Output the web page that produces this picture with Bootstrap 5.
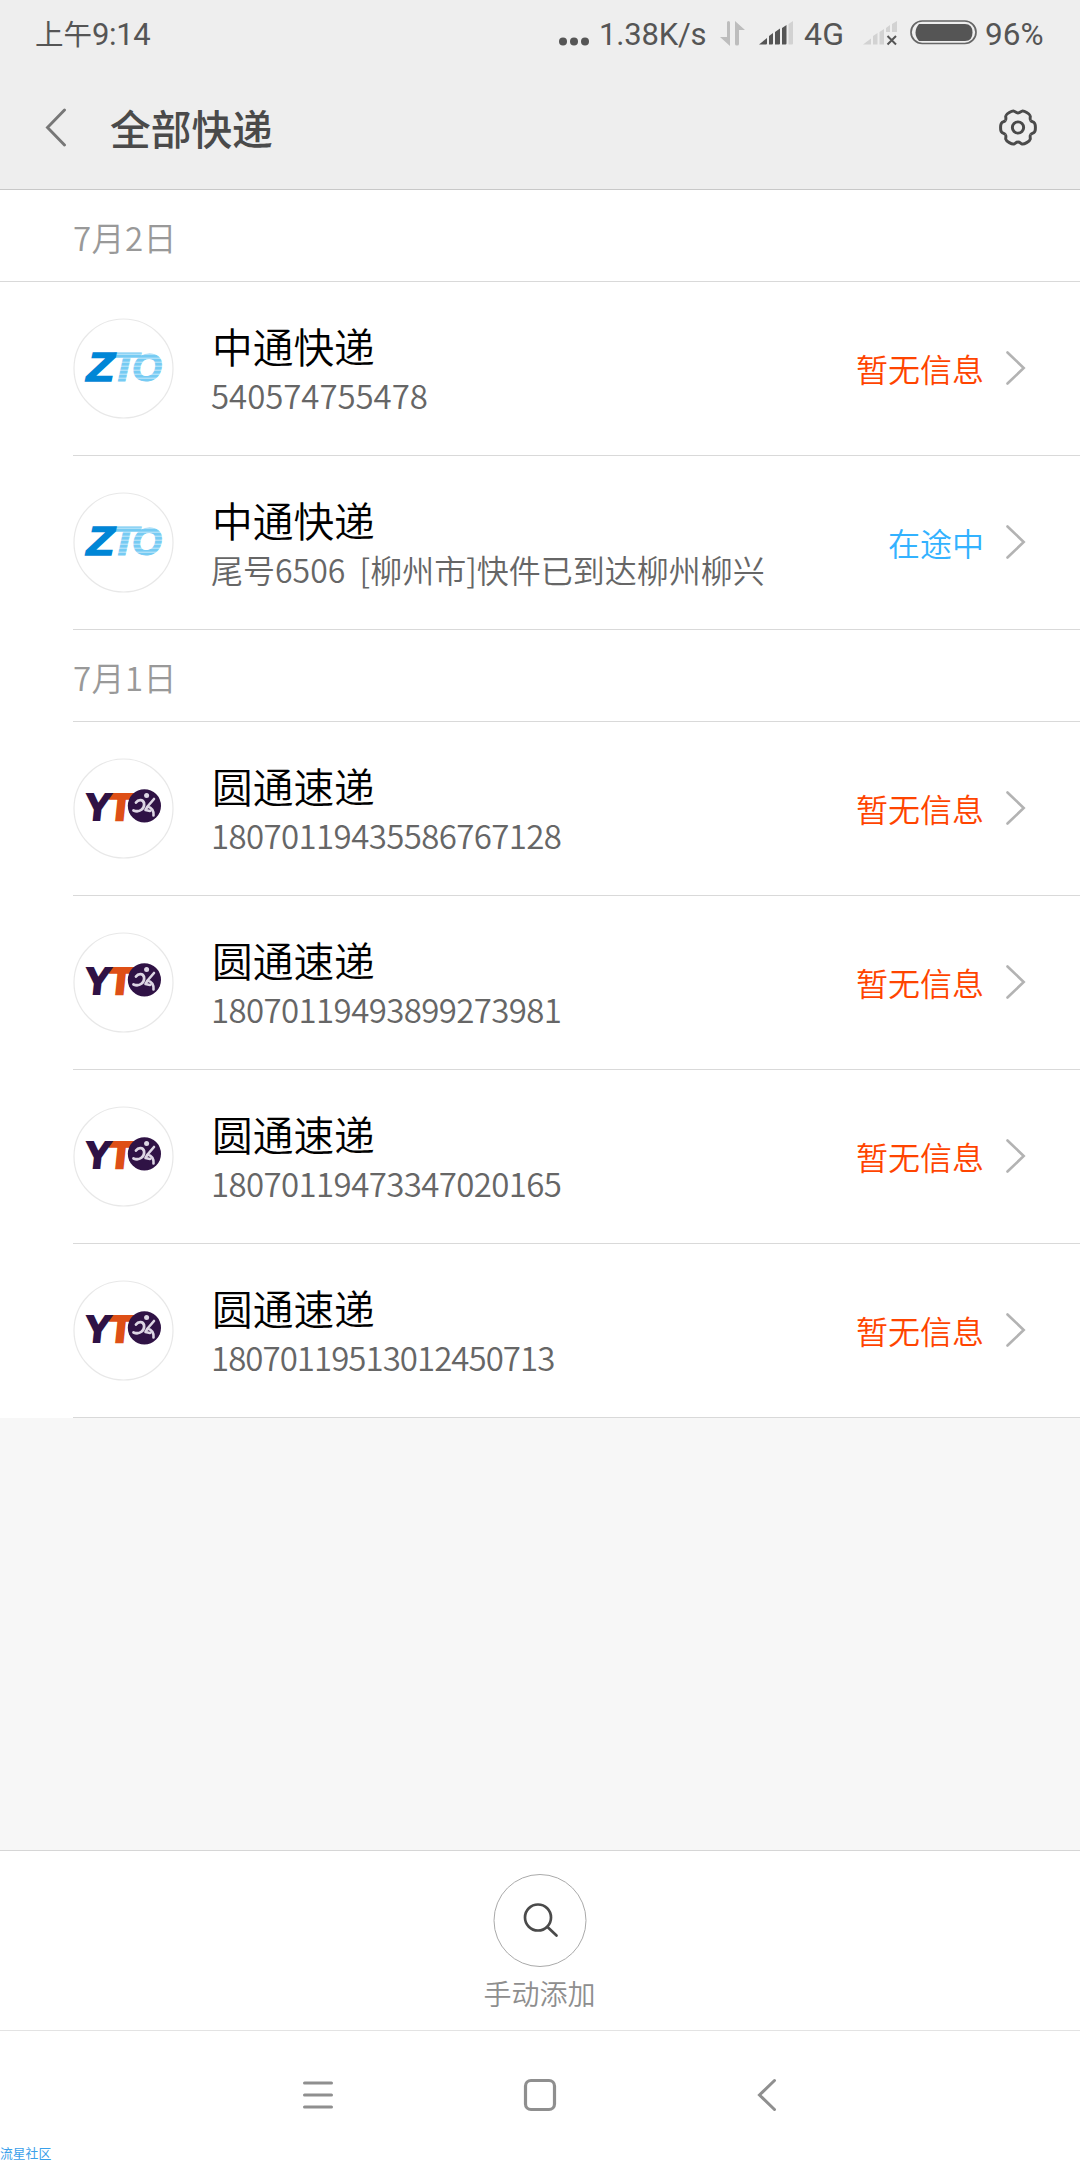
<!DOCTYPE html>
<html lang="zh-CN">
<head>
<meta charset="utf-8">
<meta name="viewport" content="width=device-width, initial-scale=1">
<title>全部快递</title>
<link href="https://cdn.jsdelivr.net/npm/bootstrap@5.3.0/dist/css/bootstrap.min.css" rel="stylesheet">
<style>
  body { font-family: "Noto Sans CJK SC", sans-serif; background: #f7f7f7; line-height: 1; }
  .screen { width: 1080px; height: 2160px; }
  svg { display: block; flex: none; }
  .topbar { background: #eee; height: 190px; border-bottom: 1px solid #c8c8c8; }
  .statusbar { height: 64px; padding: 0 35px 0 35px; color: #555; }
  .statusbar .clock { font-size: 28.5px; height: 64px; line-height: 65px; }
  .clock span, .stat-txt { font-family: Roboto, sans-serif; font-size: 31px; line-height: 69px; white-space: nowrap; }
  .clock span { letter-spacing: -.4px; }
  .speed { width: 111px; margin: 0 10px 0 10px; letter-spacing: -.2px; }
  .net { width: 42px; margin-left: 10px; font-size: 32px; letter-spacing: .2px; }
  .charge { width: 60px; margin-left: 8px; font-size: 31.5px; }
  .gap-a { margin-left: 13px; }
  .gap-b { margin-left: 17px; }
  .gap-c { margin-left: 12px; }
  .titlebar { height: 125px; padding: 0 40px 0 44px; color: #4a4a4a; }
  .titlebar h1 { font-size: 40.7px; font-weight: 500; line-height: 60px; margin: 2px 0 0 42px; }
  .day { height: 92px; padding-left: 73px; background: #fff; }
  .day > div { border-bottom: 1px solid #d9d9d9; height: 92px; font-size: 33px; letter-spacing: .4px; line-height: 94px; color: #999; font-weight: 350; }
  .day.full { padding-left: 0; }
  .day.full > div { padding-left: 73px; }
  .parcels { padding-left: 73px; background: #fff; border-radius: 0; }
  .parcel { height: 174px; border-bottom: 1px solid #d9d9d9; padding: 0 53px 0 0; }
  .logo { width: 101px; height: 101px; margin: 0 38px 1px 0; }
  .parcel .name { font-size: 40.7px; line-height: 50px; color: #000; margin-top: 3px; font-weight: 350; }
  .parcel .info { font-size: 32px; line-height: 49px; color: #666; font-weight: 350; white-space: pre; margin-left: -1px; }
  .parcel .digits { font-size: 33px; letter-spacing: -.05px; }
  .parcel .long { letter-spacing: -.6px; }
  .parcel .longer { letter-spacing: -.95px; }
  .parcel .state { font-size: 32px; line-height: 40px; margin: 0 21px 2px 0; color: #ff4400; font-weight: 350; }
  .parcel .state.moving { color: #33b2ff; }
  .parcel .arrow { margin-bottom: 2px; }
  .addbar { height: 181px; border-top: 1px solid #d6d6d6; border-bottom: 1px solid #e3e3e3; background: #fff; padding: 23px 1px 0 0; }
  .addbar .caption { font-size: 28px; line-height: 40px; margin-top: 5px; color: #8e8e8e; font-weight: 350; }
  .sysnav { height: 129px; background: #fff; padding: 47px 303px 0 302px; }
  .sysnav .home { margin-right: 12px; }
  .watermark { left: 0; bottom: 0; font-size: 12.8px; line-height: 14px; height: 14px; color: #3aa0ea; }
</style>
</head>
<body>
<svg width="0" height="0" class="position-absolute">
  <defs>
    <symbol id="zto" viewBox="0 0 101 101">
      <circle cx="50.5" cy="50.5" r="49.5" fill="#fff" stroke="#e8e8e8" stroke-width="1.2"/>
      <g font-family="Liberation Sans, sans-serif" font-weight="700" font-style="italic" font-size="41">
        <text x="37" y="63" fill="#76cbf3" stroke="#76cbf3" stroke-width=".8" textLength="28" lengthAdjust="spacingAndGlyphs">T</text>
        <text x="59" y="62.5" fill="#76cbf3" stroke="#76cbf3" font-size="39.500" textLength="30" lengthAdjust="spacingAndGlyphs">O</text>
        <path d="M40 36.2H92M40 40.2H92M40 44.2H92M40 48.2H92M40 52.2H92M40 56.2H92M40 60.2H92" stroke="#fff" stroke-opacity=".6" stroke-width="1"/>
        <text x="13.500" y="63" fill="#0086d6" stroke="#0086d6" stroke-width="1.400" textLength="28" lengthAdjust="spacingAndGlyphs">Z</text>
      </g>
    </symbol>
    <symbol id="yto" viewBox="0 0 101 101">
      <circle cx="50.5" cy="50.5" r="49.5" fill="#fff" stroke="#e8e8e8" stroke-width="1.2"/>
      <g font-family="Liberation Sans, sans-serif" font-weight="700" font-size="37.500" transform="translate(7 .7) skewX(-6)">
        <text x="34" y="61" fill="#de4f16" stroke="#de4f16" stroke-width="2.600" textLength="24" lengthAdjust="spacingAndGlyphs">T</text>
        <text x="10.500" y="61" fill="#2f1245" stroke="#2f1245" stroke-width="2.200" textLength="25" lengthAdjust="spacingAndGlyphs">Y</text>
      </g>
      <circle cx="71.4" cy="47.8" r="16.6" fill="#2f1245"/>
      <circle cx="73.6" cy="37.6" r="2.5" fill="#ddd6e4"/>
      <g fill="none" stroke="#ddd6e4" stroke-linecap="round" stroke-linejoin="round">
        <path d="M63 44.500C65.500 41 70 41.500 71 45C72 50.500 66.500 55 60.500 52.500" stroke-width="2.800"/>
        <path d="M81 41L74.500 48.500C78 49.500 81 52 80.500 57.500M74.500 48.500L72.500 52L77 53" stroke-width="2.600"/>
      </g>
    </symbol>
    <symbol id="next" viewBox="0 0 22 36"><path d="M2.5 2.5L18.7 18L2.5 33.5" fill="none" stroke="#b3b3b3" stroke-width="2.6" stroke-linecap="round"/></symbol>
    <path id="tooth" d="M12.3-7.1C13.4-5.2 14.8-5.7 15.9-4.6C17.4-3.3 17.4 3.3 15.9 4.6C14.8 5.7 13.4 5.2 12.3 7.1"/>
  </defs>
</svg>

<div class="screen position-relative d-flex flex-column overflow-hidden">
  <header class="topbar">
    <div class="statusbar d-flex">
      <div class="clock me-auto">上午<span>9:14</span></div>
      <svg width="30" height="64" viewBox="0 0 30 64" fill="#555"><circle cx="4" cy="41.5" r="4"/><circle cx="15" cy="41.5" r="4"/><circle cx="26" cy="41.5" r="4"/></svg>
      <div class="stat-txt speed">1.38K/s</div>
      <svg width="26" height="64" viewBox="0 0 26 64" fill="#bdbdbd"><path d="M7 22.500Q7 21 8.500 21T10 22.500V46L0 37H7ZM15 21L25 30H19V44Q19 45.500 17 45.500T15 44Z"/></svg>
      <svg class="gap-a" width="35" height="64" viewBox="0 0 35 64" fill="#555"><path d="M0 44.500L8 38V43.500Q8 44.500 7 44.500ZM10 36L14 33V43.500Q14 44.500 13 44.500H10ZM16 32L21 28.500V43.500Q21 44.500 20 44.500H16ZM23 28L27.500 25V43.500Q27.500 44.500 26.500 44.500H23Z"/><path fill="#d2d2d2" d="M29.500 24L34 21V43.500Q34 44.500 33 44.500H29.500Z"/></svg>
      <div class="stat-txt net">4G</div>
      <svg class="gap-b" width="35" height="64" viewBox="0 0 35 64" fill="#d2d2d2"><path d="M0 44.500L8 38.500V44.500ZM10 36L14.500 33V44.500H10ZM16.500 32L21 29V44.500H16.500ZM23 28L27 25V32H23ZM29 24L34 21V32H29Z"/><path d="M24.500 36L33 44.500M33 36L24.500 44.500" stroke="#555" stroke-width="2"/></svg>
      <svg class="gap-c" width="67" height="64" viewBox="0 0 67 64"><rect x="1" y="21" width="65" height="22.500" rx="11.200" fill="none" stroke="#666" stroke-width="1.700"/><path d="M9 24H55Q62.500 24 62.500 32.500T55 41H9Q5.500 37 5.500 32.500T9 24Z" fill="#555"/></svg>
      <div class="stat-txt charge">96%</div>
    </div>
    <div class="titlebar d-flex align-items-center">
      <svg width="24" height="40" viewBox="0 0 24 40" fill="none" stroke="#777" stroke-width="2.900" stroke-linecap="round"><path d="M20.500 3L3.500 20.500L20.500 38"/></svg>
      <h1 class="me-auto">全部快递</h1>
      <svg width="44" height="44" viewBox="-21.500 -22 43 43" fill="none" stroke="#4a4a4a" stroke-width="2.900"><circle r="5.500"/><use href="#tooth"/><use href="#tooth" transform="rotate(60)"/><use href="#tooth" transform="rotate(120)"/><use href="#tooth" transform="rotate(180)"/><use href="#tooth" transform="rotate(240)"/><use href="#tooth" transform="rotate(300)"/></svg>
    </div>
  </header>

  <main class="flex-grow-1">
    <div class="day full"><div>7月2日</div></div>
    <div class="parcels list-group">
      <div class="parcel d-flex align-items-center">
        <svg class="logo"><use href="#zto"/></svg>
        <div class="me-auto"><div class="name">中通快递</div><div class="info digits">540574755478</div></div>
        <div class="state">暂无信息</div><svg class="arrow" width="22" height="36"><use href="#next"/></svg>
      </div>
      <div class="parcel d-flex align-items-center">
        <svg class="logo"><use href="#zto"/></svg>
        <div class="me-auto"><div class="name">中通快递</div><div class="info">尾号6506  [柳州市]快件已到达柳州柳兴</div></div>
        <div class="state moving">在途中</div><svg class="arrow" width="22" height="36"><use href="#next"/></svg>
      </div>
    </div>
    <div class="day"><div>7月1日</div></div>
    <div class="parcels list-group">
      <div class="parcel d-flex align-items-center">
        <svg class="logo"><use href="#yto"/></svg>
        <div class="me-auto"><div class="name">圆通速递</div><div class="info digits long">18070119435586767128</div></div>
        <div class="state">暂无信息</div><svg class="arrow" width="22" height="36"><use href="#next"/></svg>
      </div>
      <div class="parcel d-flex align-items-center">
        <svg class="logo"><use href="#yto"/></svg>
        <div class="me-auto"><div class="name">圆通速递</div><div class="info digits long">18070119493899273981</div></div>
        <div class="state">暂无信息</div><svg class="arrow" width="22" height="36"><use href="#next"/></svg>
      </div>
      <div class="parcel d-flex align-items-center">
        <svg class="logo"><use href="#yto"/></svg>
        <div class="me-auto"><div class="name">圆通速递</div><div class="info digits long">18070119473347020165</div></div>
        <div class="state">暂无信息</div><svg class="arrow" width="22" height="36"><use href="#next"/></svg>
      </div>
      <div class="parcel d-flex align-items-center">
        <svg class="logo"><use href="#yto"/></svg>
        <div class="me-auto"><div class="name">圆通速递</div><div class="info digits longer">18070119513012450713</div></div>
        <div class="state">暂无信息</div><svg class="arrow" width="22" height="36"><use href="#next"/></svg>
      </div>
    </div>
  </main>

  <div class="addbar d-flex flex-column align-items-center">
    <svg width="94" height="94" viewBox="0 0 94 94" fill="none"><circle cx="47" cy="46.500" r="46" stroke="#aaa"/><circle cx="45" cy="43.500" r="13" stroke="#4a4a4a" stroke-width="2.700"/><path d="M54.500 53L63.500 61.500" stroke="#4a4a4a" stroke-width="2.700" stroke-linecap="round"/></svg>
    <div class="caption">手动添加</div>
  </div>
  <nav class="sysnav d-flex justify-content-between align-items-start">
    <svg width="32" height="34" viewBox="0 0 32 34" stroke="#8f8f8f" stroke-width="3" stroke-linecap="round"><path d="M2.500 5H29.500M2.500 17H29.500M2.500 29H29.500"/></svg>
    <svg class="home" width="34" height="34" viewBox="0 0 34 34" fill="none" stroke="#8f8f8f" stroke-width="3.200"><rect x="2.500" y="2.500" width="29" height="29" rx="5.500"/></svg>
    <svg width="20" height="34" viewBox="0 0 20 34" fill="none" stroke="#8f8f8f" stroke-width="3" stroke-linecap="round"><path d="M17.500 2.500L2.500 17L17.500 31.500"/></svg>
  </nav>
  <div class="watermark position-absolute">流星社区</div>
</div>
<script src="https://cdn.jsdelivr.net/npm/bootstrap@5.3.0/dist/js/bootstrap.bundle.min.js"></script>
</body>
</html>
